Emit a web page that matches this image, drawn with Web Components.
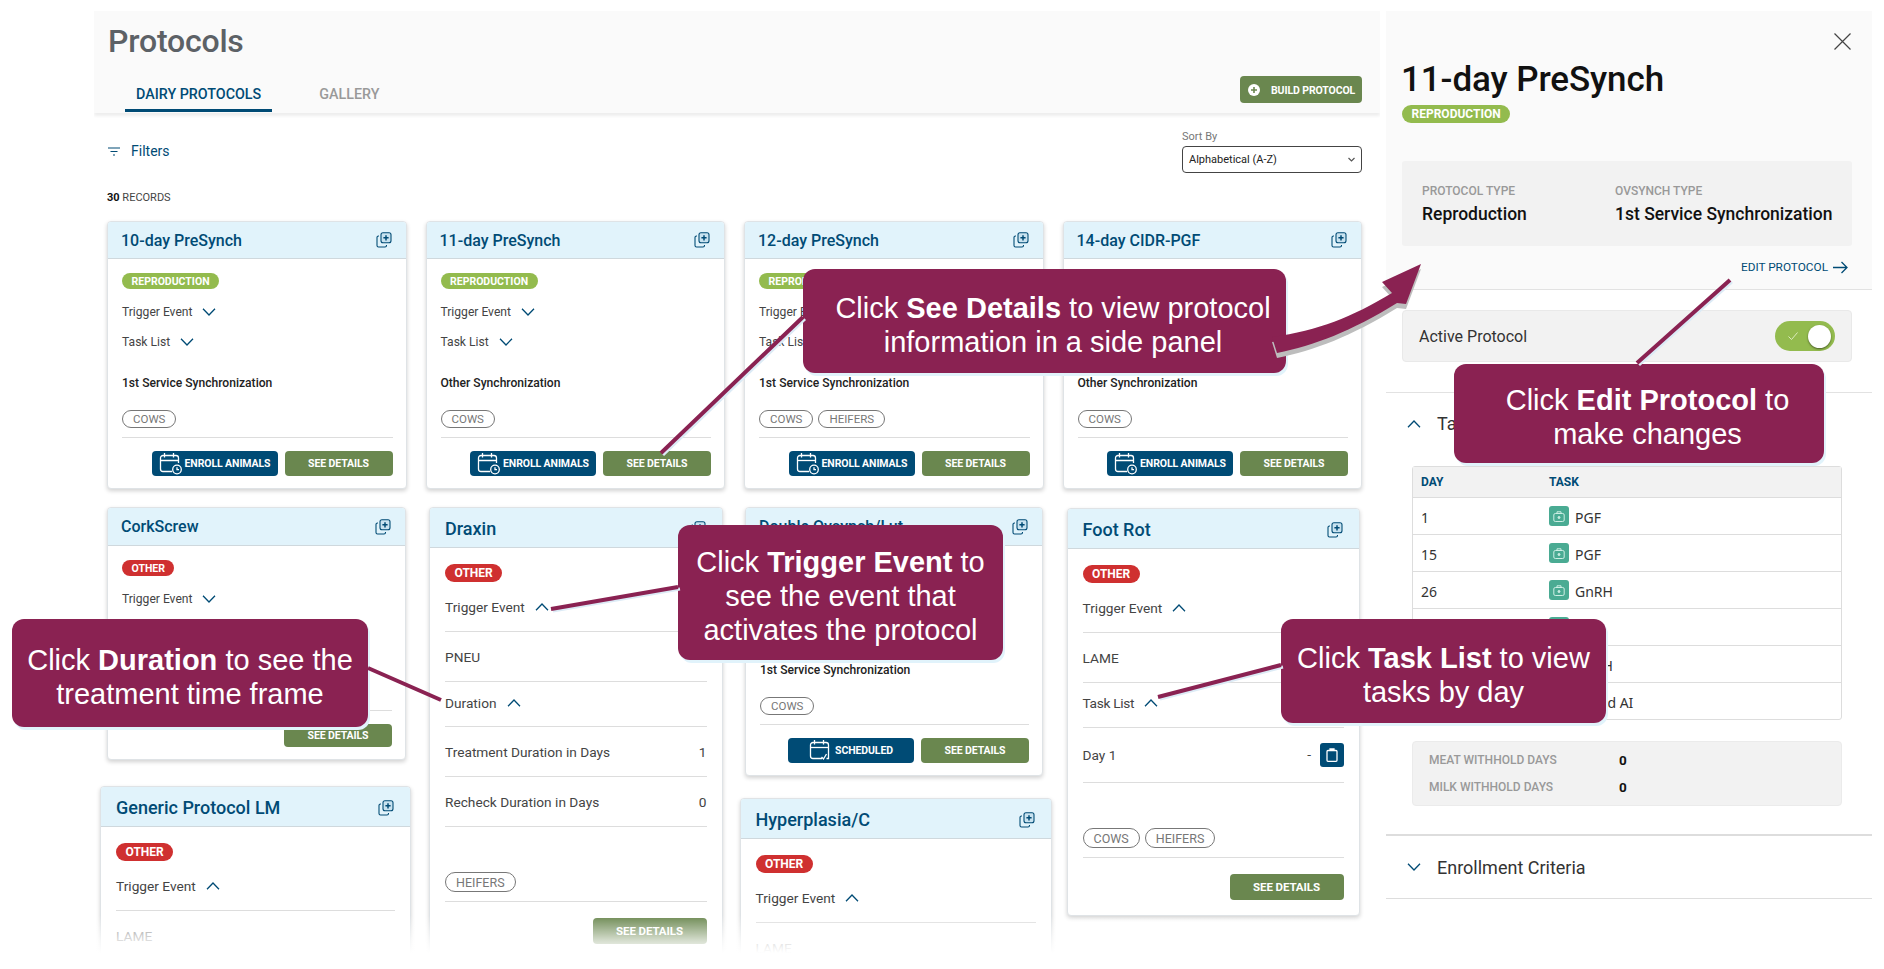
<!DOCTYPE html>
<html>
<head>
<meta charset="utf-8">
<title>Protocols</title>
<style>
html, body { margin: 0; padding: 0; background: #fff; height: 969px; overflow: hidden; }
body { font-family: Roboto, "Noto Sans", sans-serif; position: relative; }
#page { display: flex; align-items: flex-start; height: 969px; overflow: hidden; }
</style>
</head>
<body>
<div id="page">
  <protocols-main>
    <proto-header title="Protocols"></proto-header>
    <proto-toolbar records="30"></proto-toolbar>
    <card-grid>
      <proto-card title="10-day PreSynch">
        <proto-badge kind="repro">REPRODUCTION</proto-badge>
        <proto-row chevron="down" class="first">Trigger Event</proto-row>
        <proto-row chevron="down">Task List</proto-row>
        <sync-line>1st Service Synchronization</sync-line>
        <pill-row><proto-pill>COWS</proto-pill></pill-row>
        <proto-button slot="foot" kind="blue" icon="enroll" style="width:126px">ENROLL ANIMALS</proto-button>
        <proto-button slot="foot" kind="green" style="width:108px">SEE DETAILS</proto-button>
      </proto-card>
      <proto-card title="11-day PreSynch">
        <proto-badge kind="repro">REPRODUCTION</proto-badge>
        <proto-row chevron="down" class="first">Trigger Event</proto-row>
        <proto-row chevron="down">Task List</proto-row>
        <sync-line>Other Synchronization</sync-line>
        <pill-row><proto-pill>COWS</proto-pill></pill-row>
        <proto-button slot="foot" kind="blue" icon="enroll" style="width:126px">ENROLL ANIMALS</proto-button>
        <proto-button slot="foot" kind="green" style="width:108px">SEE DETAILS</proto-button>
      </proto-card>
      <proto-card title="12-day PreSynch">
        <proto-badge kind="repro">REPRODUCTION</proto-badge>
        <proto-row chevron="down" class="first">Trigger Event</proto-row>
        <proto-row chevron="down">Task List</proto-row>
        <sync-line>1st Service Synchronization</sync-line>
        <pill-row><proto-pill>COWS</proto-pill><proto-pill>HEIFERS</proto-pill></pill-row>
        <proto-button slot="foot" kind="blue" icon="enroll" style="width:126px">ENROLL ANIMALS</proto-button>
        <proto-button slot="foot" kind="green" style="width:108px">SEE DETAILS</proto-button>
      </proto-card>
      <proto-card title="14-day CIDR-PGF">
        <proto-badge kind="repro"></proto-badge>
        <proto-row class="first"></proto-row>
        <proto-row></proto-row>
        <sync-line>Other Synchronization</sync-line>
        <pill-row><proto-pill>COWS</proto-pill></pill-row>
        <proto-button slot="foot" kind="blue" icon="enroll" style="width:126px">ENROLL ANIMALS</proto-button>
        <proto-button slot="foot" kind="green" style="width:108px">SEE DETAILS</proto-button>
      </proto-card>
    </card-grid>
    <card-columns>
      <card-column style="width:311px">
        <proto-card title="CorkScrew" style="width:299px;margin-left:7px;--head:38px">
          <proto-badge kind="other">OTHER</proto-badge>
          <proto-row chevron="down" class="first">Trigger Event</proto-row>
          <proto-row></proto-row>
          <pill-row style="margin-top:39px;height:18px"></pill-row>
          <proto-button slot="foot" kind="green" style="width:108px;height:23px">SEE DETAILS</proto-button>
        </proto-card>
        <proto-card large title="Generic Protocol LM" style="margin-top:26px">
          <proto-badge kind="other">OTHER</proto-badge>
          <proto-row chevron="up" ruled style="height:44px;padding-bottom:2px;margin-top:3px">Trigger Event</proto-row>
          <proto-row muted style="height:50px">LAME</proto-row>
        </proto-card>
      </card-column>
      <card-column style="width:294px;margin-left:18px">
        <proto-card large title="Draxin">
          <proto-badge kind="other">OTHER</proto-badge>
          <proto-row chevron="up" ruled style="height:44px;padding-bottom:2px;margin-top:3px">Trigger Event</proto-row>
          <proto-row ruled style="height:49px">PNEU</proto-row>
          <proto-row chevron="up" ruled style="height:42px;padding-bottom:2px">Duration</proto-row>
          <proto-row ruled style="height:49px">Treatment Duration in Days<span slot="end">1</span></proto-row>
          <proto-row ruled style="height:49px">Recheck Duration in Days<span slot="end">0</span></proto-row>
          <pill-row style="margin-top:45px"><proto-pill>HEIFERS</proto-pill></pill-row>
          <proto-button slot="foot" kind="green" style="width:114px">SEE DETAILS</proto-button>
        </proto-card>
      </card-column>
      <card-column style="width:312.5px;margin-left:16.5px">
        <proto-card title="Double Ovsynch/Lut" style="width:298px;margin-left:5.5px;--head:38px">
          <proto-badge kind="other"></proto-badge>
          <proto-row class="first"></proto-row>
          <proto-row></proto-row>
          <sync-line>1st Service Synchronization</sync-line>
          <pill-row><proto-pill>COWS</proto-pill></pill-row>
          <proto-button slot="foot" kind="blue" icon="scheduled" style="width:126px">SCHEDULED</proto-button>
          <proto-button slot="foot" kind="green" style="width:108px">SEE DETAILS</proto-button>
        </proto-card>
        <proto-card large title="Hyperplasia/C" style="margin-top:22px">
          <proto-badge kind="other">OTHER</proto-badge>
          <proto-row chevron="up" ruled style="height:44px;padding-bottom:2px;margin-top:3px">Trigger Event</proto-row>
          <proto-row muted style="height:50px">LAME</proto-row>
        </proto-card>
      </card-column>
      <card-column style="width:293.5px;margin-left:14.5px;margin-top:1px">
        <proto-card large title="Foot Rot">
          <proto-badge kind="other">OTHER</proto-badge>
          <proto-row chevron="up" ruled style="height:44px;padding-bottom:2px;margin-top:3px">Trigger Event</proto-row>
          <proto-row ruled style="height:49px">LAME</proto-row>
          <proto-row chevron="up" ruled style="height:40px;padding-bottom:4px;letter-spacing:-.3px">Task List</proto-row>
          <proto-row ruled style="height:54px">Day 1<span slot="end">- <clip-button></clip-button></span></proto-row>
          <pill-row style="margin-top:45px"><proto-pill>COWS</proto-pill><proto-pill>HEIFERS</proto-pill></pill-row>
          <proto-button slot="foot" kind="green" style="width:114px">SEE DETAILS</proto-button>
        </proto-card>
      </card-column>
    </card-columns>
    <fade-out></fade-out>
  </protocols-main>
  <side-panel title="11-day PreSynch"></side-panel>
</div>
<tutorial-layer>
  <call-out style="left:803px;top:269px;width:483px;height:104px;padding-left:17px">Click <b>See Details</b> to view protocol<br>information in a side panel</call-out>
  <call-out style="left:1454px;top:364px;width:370px;height:99px;padding-left:17px">Click <b>Edit Protocol</b> to<br>make changes</call-out>
  <call-out style="left:678px;top:525px;width:325px;height:135px">Click <b>Trigger Event</b> to<br>see the event that<br>activates the protocol</call-out>
  <call-out style="left:12px;top:619px;width:356px;height:108px">Click <b>Duration</b> to see the<br>treatment time frame</call-out>
  <call-out style="left:1281px;top:619px;width:325px;height:104px">Click <b>Task List</b> to view<br>tasks by day</call-out>
</tutorial-layer>

<script>
const BLUE = '#004b75';
const chevronSvg = dir => `<svg width="14" height="8" viewBox="0 0 14 8" fill="none" stroke="${BLUE}" stroke-width="1.3">
  <polyline points="${dir === 'up' ? '1,7.2 7,1 13,7.2' : '1,.8 7,7 13,.8'}"/></svg>`;

const calendarBase = `<path d="M12 4.5H4a2.5 2.5 0 0 0-2.5 2.5v11A2.5 2.5 0 0 0 4 20.500h9" /><path d="M1.500 9.500h17.500" /><path d="M5.500 2v4.500M14.500 2v4.500" /><path d="M12 4.500h5a2.500 2.500 0 0 1 2.500 2.500v5"/>`;
const ICONS = {
  enroll: `<svg width="24" height="25" viewBox="0 0 24 25" fill="none" stroke="#fff" stroke-width="1.300">${calendarBase}<circle cx="18" cy="18.500" r="4.300"/><path d="M18 16.200v2.500h2"/></svg>`,
  scheduled: `<svg width="24" height="25" viewBox="0 0 24 25" fill="none" stroke="#fff" stroke-width="1.300">${calendarBase}<path d="M19.500 12v8.500h-2"/><path d="M12.500 19l2 2 3-5" /></svg>`
};

class ProtocolsMain extends HTMLElement {
  connectedCallback() {
    this.attachShadow({ mode: 'open' });
    this.shadowRoot.innerHTML = `
      <style>
        :host { display: block; position: relative; box-sizing: border-box; width: 1286px; margin-left: 94px; padding-top: 11px; height: 969px; overflow: hidden; }
      </style>
      <slot></slot>`;
  }
}

class ProtoHeader extends HTMLElement {
  connectedCallback() {
    this.attachShadow({ mode: 'open' });
    this.shadowRoot.innerHTML = `
      <style>
        :host { display: flex; justify-content: space-between; align-items: flex-end; height: 102px; background: #fafafa; box-shadow: 0 3px 3px #eee; box-sizing: border-box; padding: 0 18px 0 14px; }
        h1 { margin: 0; font-size: 32px; line-height: 38px; font-weight: 500; color: #5c6166; letter-spacing: -.2px; padding-top: 11px; }
        .left { display: flex; flex-direction: column; height: 100%; justify-content: space-between; }
        .tabs { display: flex; padding-left: 17px; }
        .tab { font-size: 14.300px; font-weight: 500; line-height: 16px; padding: 0 11px 7px; border-bottom: 3px solid transparent; color: #999; margin-bottom: 1px; }
        .tab.on { color: ${BLUE}; border-bottom-color: ${BLUE}; margin-right: 36px; }
        .build { display: flex; align-items: center; gap: 11px; height: 27px; padding: 1px 6px 0 8px; width: 122px; box-sizing: border-box; background: #6a874f; border-radius: 4px; color: #fff; font-size: 10.500px; font-weight: 700; margin-bottom: 10px; white-space: nowrap; letter-spacing: -.1px; }
      </style>
      <div class="left">
        <h1>${this.getAttribute('title')}</h1>
        <div class="tabs"><div class="tab on">DAIRY PROTOCOLS</div><div class="tab">GALLERY</div></div>
      </div>
      <div class="build">
        <svg width="12" height="12" viewBox="0 0 12 12"><circle cx="6" cy="6" r="6" fill="#fff"/><path d="M6 3v6M3 6h6" stroke="#6a874f" stroke-width="1.600"/></svg>
        BUILD PROTOCOL
      </div>`;
  }
}

class ProtoToolbar extends HTMLElement {
  connectedCallback() {
    this.attachShadow({ mode: 'open' });
    this.shadowRoot.innerHTML = `
      <style>
        :host { display: block; padding: 0 18px 0 13px; height: 108px; box-sizing: border-box; }
        .top { display: flex; justify-content: space-between; padding-top: 17px; height: 60px; box-sizing: border-box; }
        .filters { display: flex; align-items: center; gap: 11px; color: ${BLUE}; font-size: 14px; padding-left: 1px; height: 42px; }
        .sort { width: 180px; }
        .sort label { display: block; font-size: 11px; line-height: 13px; color: #777; }
        .select { display: flex; justify-content: space-between; align-items: center; height: 27px; margin-top: 3px; box-sizing: border-box; border: 1px solid #444; border-radius: 4px; padding: 0 6px; font-size: 11px; color: #222; }
        .rec { font-size: 11px; line-height: 14px; color: #444; margin-top: 18px; }
        .rec b { color: #111; font-weight: 700; }
      </style>
      <div class="top">
        <div class="filters">
          <svg width="12" height="9" viewBox="0 0 12 9" stroke="${BLUE}" stroke-width="1.200"><path d="M0 1h12M2.500 4.500h7M5 8h2"/></svg>
          Filters
        </div>
        <div class="sort">
          <label>Sort By</label>
          <div class="select">Alphabetical (A-Z)
            <svg width="7" height="5" viewBox="0 0 7 5" fill="none" stroke="#555" stroke-width="1.200"><polyline points=".5,1 3.500,4 6.500,1"/></svg>
          </div>
        </div>
      </div>
      <div class="rec"><b>30</b> RECORDS</div>`;
  }
}

class CardGrid extends HTMLElement {
  connectedCallback() {
    this.attachShadow({ mode: 'open' });
    this.shadowRoot.innerHTML = `
      <style>:host { display: grid; grid-template-columns: repeat(4, 1fr); column-gap: 19px; padding: 0 18px 0 13px; box-sizing: border-box; }</style>
      <slot></slot>`;
  }
}

class CardColumns extends HTMLElement {
  connectedCallback() {
    this.attachShadow({ mode: 'open' });
    this.shadowRoot.innerHTML = `
      <style>:host { display: flex; align-items: flex-start; margin-top: 18px; padding-left: 6px; }</style>
      <slot></slot>`;
  }
}

class CardColumn extends HTMLElement {
  connectedCallback() {
    this.attachShadow({ mode: 'open' });
    this.shadowRoot.innerHTML = `
      <style>:host { display: block; flex: none; }</style>
      <slot></slot>`;
  }
}

class ProtoCard extends HTMLElement {
  connectedCallback() {
    this.attachShadow({ mode: 'open' });
    this.shadowRoot.innerHTML = `
      <style>
        :host { display: block; box-sizing: border-box; border: 1px solid #dfe3e6; border-radius: 4px; box-shadow: 0 2px 4px rgba(0,0,0,.18); background: #fff; overflow: hidden;
          font-size: 12.100px; color: #444; --pad-l: 14px; --pad-r: 13px; --title-l: -1px; --head: 37px; --title: 16px; --badge-h: 16px; --badge-fs: 10.500px; --pill-h: 18px; --pill-fs: 11.500px; --btn-h: 25px; --btn-fs: 10.500px; }
        :host([large]) { font-size: 13.700px; --pad-l: 15px; --pad-r: 15.500px; --title-l: 0px; --head: 40px; --title: 18px; --badge-h: 18px; --badge-fs: 12px; --pill-h: 20px; --pill-fs: 12.500px; --btn-h: 26px; --btn-fs: 11.500px; }
        .head { display: flex; justify-content: space-between; align-items: center; height: var(--head); box-sizing: border-box; background: #e1f3fb; border-bottom: 1px solid #cfd8dd; padding: 0 calc(var(--pad-r) + 1px) 0 var(--pad-l); }
        :host([large]) .head { padding-top: 2px; }
        .title { font-size: var(--title); font-weight: 500; color: ${BLUE}; white-space: nowrap; margin-left: var(--title-l); }
        .body { padding: 14px var(--pad-r) 0 var(--pad-l); }
        :host([large]) .body { padding-top: 16px; }
        .foot { display: flex; justify-content: flex-end; gap: 7px; margin: 9px var(--pad-r) 0 var(--pad-l); padding: 13px 0 12px; border-top: 1px solid #ddd; }
        :host([large]) .foot { padding: 16px 0 15px; margin-top: 9px; }
      </style>
      <div class="head">
        <span class="title">${this.getAttribute('title')}</span>
        <svg width="16" height="16" viewBox="0 0 16 16" fill="none" stroke="${BLUE}" stroke-width="1.100">
          <rect x="5" y=".8" width="10" height="10" rx="2" fill="#c9e3f0"/>
          <path d="M10 3.200v5.200M7.400 5.800h5.200" stroke-width="1.500"/>
          <path d="M3 4H2.500A1.500 1.500 0 0 0 1 5.500v8A1.500 1.500 0 0 0 2.500 15H9a1.500 1.500 0 0 0 1.500-1.500V13"/>
        </svg>
      </div>
      <div class="body"><slot></slot></div>
      <div class="foot"><slot name="foot"></slot></div>`;
  }
}

class ProtoBadge extends HTMLElement {
  connectedCallback() {
    this.attachShadow({ mode: 'open' });
    this.shadowRoot.innerHTML = `
      <style>
        :host { display: inline-flex; vertical-align: top; align-items: center; height: var(--badge-h, 16px); padding: 0 9.500px; border-radius: 9px; color: #fff; font-weight: 700; font-size: var(--badge-fs, 10.500px); background: #93bb4e; }
        :host([kind="other"]) { background: #cf3030; }
      </style>
      <slot></slot>`;
  }
}

class ProtoRow extends HTMLElement {
  connectedCallback() {
    this.attachShadow({ mode: 'open' });
    const dir = this.getAttribute('chevron');
    this.shadowRoot.innerHTML = `
      <style>
        :host { display: flex; align-items: center; height: 30px; box-sizing: content-box; color: #444; }
        :host(.first) { margin-top: 8px; }
        :host([ruled]) { border-bottom: 1px solid #ddd; }
        :host([muted]) { color: #888; }
        svg { margin-left: 10px; }
        .end { margin-left: auto; display: flex; }
      </style>
      <span><slot></slot></span>${dir ? chevronSvg(dir) : ''}<span class="end"><slot name="end"></slot></span>`;
  }
}

class SyncLine extends HTMLElement {
  connectedCallback() {
    this.attachShadow({ mode: 'open' });
    this.shadowRoot.innerHTML = `
      <style>:host { display: block; margin-top: 17px; line-height: 18px; height: 18px; color: #222; font-weight: 500; }</style>
      <slot></slot>`;
  }
}

class PillRow extends HTMLElement {
  connectedCallback() {
    this.attachShadow({ mode: 'open' });
    this.shadowRoot.innerHTML = `
      <style>:host { display: flex; gap: 5px; margin-top: 18px; }</style>
      <slot></slot>`;
  }
}

class ProtoPill extends HTMLElement {
  connectedCallback() {
    this.attachShadow({ mode: 'open' });
    this.shadowRoot.innerHTML = `
      <style>:host { display: inline-flex; align-items: center; box-sizing: border-box; height: var(--pill-h, 18px); padding: 0 10px; border: 1px solid #777; border-radius: 10px; color: #777; font-size: var(--pill-fs, 11.500px); }</style>
      <slot></slot>`;
  }
}

class ProtoButton extends HTMLElement {
  connectedCallback() {
    this.attachShadow({ mode: 'open' });
    const icon = ICONS[this.getAttribute('icon')] || '';
    this.shadowRoot.innerHTML = `
      <style>
        :host { display: flex; align-items: center; justify-content: center; gap: 2px; box-sizing: border-box; height: var(--btn-h, 25px); border-radius: 4px; background: #6a874f; color: #fff; font-weight: 700; font-size: var(--btn-fs, 10.500px); white-space: nowrap; letter-spacing: -.1px; }
        :host([kind="blue"]) { background: ${BLUE}; }
      </style>
      ${icon}<slot></slot>`;
  }
}

class ClipButton extends HTMLElement {
  connectedCallback() {
    this.attachShadow({ mode: 'open' });
    this.shadowRoot.innerHTML = `
      <style>:host { display: inline-flex; align-items: center; justify-content: center; width: 24px; height: 24px; margin-left: 5px; background: ${BLUE}; border-radius: 3px; vertical-align: middle; }</style>
      <svg width="12" height="14" viewBox="0 0 12 14" fill="none" stroke="#fff" stroke-width="1.300"><rect x="1" y="2.500" width="10" height="10.800" rx="1"/><path d="M4 2.500V1h4v1.500" fill="#fff"/></svg>`;
  }
}

class FadeOut extends HTMLElement {
  connectedCallback() {
    this.attachShadow({ mode: 'open' });
    this.shadowRoot.innerHTML = `
      <style>:host { display: block; position: absolute; left: 0; right: 0; top: 915px; bottom: 0; background: linear-gradient(rgba(255,255,255,0), rgba(255,255,255,.7) 25px, #fff 38px); }</style>`;
  }
}

class TaskRow extends HTMLElement {
  connectedCallback() {
    this.attachShadow({ mode: 'open' });
    this.shadowRoot.innerHTML = `
      <style>
        :host { display: grid; grid-template-columns: 128px 1fr; align-items: center; height: 37px; box-sizing: border-box; padding-left: 8px; border-top: 1px solid #ddd; font-family: "Noto Sans", sans-serif; font-size: 14px; color: #333; }
        .task { display: flex; align-items: center; gap: 6px; }
        .txt { padding-top: 2px; }
        .ico { width: 20px; height: 20px; border-radius: 3px; background: #4aab93; display: flex; align-items: center; justify-content: center; }
      </style>
      <span class="txt">${this.getAttribute('day')}</span>
      <span class="task"><span class="ico"><svg width="12" height="11" viewBox="0 0 12 11" fill="none" stroke="#cdeee4" stroke-width="1"><rect x=".8" y="2.500" width="10.400" height="8" rx="1.500"/><path d="M4 2.500V.8h4v1.700"/><circle cx="6" cy="6.500" r="1" fill="#cdeee4"/></svg></span><span class="txt"><slot></slot></span></span>`;
  }
}

class SidePanel extends HTMLElement {
  connectedCallback() {
    this.attachShadow({ mode: 'open' });
    this.shadowRoot.innerHTML = `
      <style>
        :host { display: block; flex: none; width: 486px; margin: 11px 0 0 6px; --badge-h: 18px; --badge-fs: 12px; color: #333; }
        .top { position: relative; height: 279px; box-sizing: border-box; padding: 47px 20px 0 16px; background: #fafafa; border-bottom: 1px solid #e2e2e2; }
        .close { position: absolute; right: 21px; top: 22px; }
        h2 { margin: 0 0 0 -1px; font-size: 35px; line-height: 44px; font-weight: 500; color: #111; letter-spacing: -.1px; }
        .info { display: grid; grid-template-columns: 193px 1fr; height: 85px; box-sizing: border-box; margin-top: 38px; padding: 22px 20px 0; background: #f2f2f2; border-radius: 3px; }
        .lab { font-size: 12px; line-height: 16px; font-weight: 500; color: #999; }
        .val { font-size: 17.500px; line-height: 22px; font-weight: 500; color: #111; margin-top: 4px; white-space: nowrap; }
        .edit { display: flex; justify-content: flex-end; align-items: center; gap: 5px; margin-top: 14px; padding-right: 4px; font-size: 11.800px; color: ${BLUE}; }
        .active { display: flex; justify-content: space-between; align-items: center; box-sizing: border-box; height: 52px; margin: 20px 20px 0 16px; padding: 0 16px; background: #f2f2f2; border: 1px solid #e9e9e9; border-radius: 4px; font-size: 16px; }
        .toggle { display: flex; align-items: center; justify-content: space-between; width: 60px; height: 30px; box-sizing: border-box; padding: 0 4px 0 13px; background: #93bb4e; border-radius: 15px; }
        .knob { width: 23px; height: 23px; border-radius: 50%; background: #fff; box-shadow: 0 1px 2px rgba(0,0,0,.5); }
        .rule { border-bottom: 1px solid #e2e2e2; height: 0; }
        .sec { display: flex; align-items: center; gap: 16px; padding-left: 21px; font-size: 18px; color: #333; height: 61px; }
        .table { margin: 12px 30px 0 26px; border: 1px solid #ddd; border-radius: 3px; }
        .thead { display: grid; grid-template-columns: 128px 1fr; align-items: center; height: 30px; padding-left: 8px; background: #f2f2f2; color: ${BLUE}; font-size: 12px; font-weight: 700; }
        .with { display: grid; grid-template-columns: 190px 1fr; row-gap: 0; align-content: center; height: 65px; box-sizing: border-box; margin: 21px 30px 0 26px; padding: 0 16px; background: #f2f2f2; border: 1px solid #ebebeb; border-radius: 4px; font-size: 12px; }
        .with span { line-height: 26.500px; font-weight: 500; color: #999; }
        .with b { line-height: 26.500px; color: #111; font-size: 13.500px; }
        .rule2 { margin-top: 28px; border-top: 2px solid #ddd; }
        .crit { height: 62px; border-bottom: 1px solid #ddd; }
      </style>
      <div class="top">
        <svg class="close" width="17" height="17" viewBox="0 0 17 17" stroke="#444" stroke-width="1.200"><path d="M.5.5l16 16M16.500.5l-16 16"/></svg>
        <h2>${this.getAttribute('title')}</h2>
        <proto-badge kind="repro" style="display:inline-flex;vertical-align:top;margin-top:3px">REPRODUCTION</proto-badge>
        <div class="info">
          <div><div class="lab">PROTOCOL TYPE</div><div class="val">Reproduction</div></div>
          <div><div class="lab">OVSYNCH TYPE</div><div class="val">1st Service Synchronization</div></div>
        </div>
        <div class="edit">EDIT PROTOCOL
          <svg width="15" height="13" viewBox="0 0 15 13" fill="none" stroke="${BLUE}" stroke-width="1.300"><path d="M0 6.500h14M8.500 1l5.500 5.500L8.500 12"/></svg>
        </div>
      </div>
      <div class="active">Active Protocol
        <div class="toggle">
          <svg width="10" height="8" viewBox="0 0 10 8" fill="none" stroke="#dbeabd" stroke-width="1"><path d="M.5 4.500l3 3 6-7"/></svg>
          <div class="knob"></div>
        </div>
      </div>
      <div class="rule" style="margin-top:30px"></div>
      <div class="sec">${chevronSvg('up')}<span>Task List</span></div>
      <div class="table">
        <div class="thead"><span>DAY</span><span>TASK</span></div>
        <task-row day="1">PGF</task-row>
        <task-row day="15">PGF</task-row>
        <task-row day="26">GnRH</task-row>
        <task-row day=""></task-row>
        <task-row day="">GnRH</task-row>
        <task-row day="">Timed AI</task-row>
      </div>
      <div class="with">
        <span>MEAT WITHHOLD DAYS</span><b>0</b>
        <span>MILK WITHHOLD DAYS</span><b>0</b>
      </div>
      <div class="rule2"></div>
      <div class="sec crit">${chevronSvg('down')}<span>Enrollment Criteria</span></div>`;
  }
}

class CallOut extends HTMLElement {
  connectedCallback() {
    this.attachShadow({ mode: 'open' });
    this.shadowRoot.innerHTML = `
      <style>
        :host { position: absolute; display: flex; align-items: center; justify-content: center; text-align: center; box-sizing: border-box; padding-top: 7px; background: #8a2252; color: #fff; border-radius: 12px; box-shadow: 2px 3px 0 #e1f3fb; font: 29px/34px "Liberation Sans", Arial, sans-serif; white-space: nowrap; }
      </style>
      <div><slot></slot></div>`;
  }
}

class TutorialLayer extends HTMLElement {
  connectedCallback() {
    this.attachShadow({ mode: 'open' });
    const arrow = 'M1272 337 C1320 330 1350 318 1392 293 L1382 282 L1421 264 L1406 304 L1397 303 C1350 332 1315 345 1277 353 Z';
    this.shadowRoot.innerHTML = `
      <style>
        :host { position: absolute; left: 0; top: 0; width: 1884px; height: 969px; display: block; }
        svg { position: absolute; left: 0; top: 0; }
      </style>
      <slot></slot>
      <svg width="1884" height="969" viewBox="0 0 1884 969" fill="none">
        <g stroke="#dcebf6" stroke-width="3" transform="translate(2 2)">
          <path d="M661 453L803 317M1730 280L1637 363M551 609L678 587M1158 697L1281 665"/>
        </g>
        <g stroke="#8a2252" stroke-width="4">
          <path d="M661 453L803 317M1730 280L1637 363M551 609L678 587M368 668L441 700M1158 697L1281 665"/>
        </g>
        <path d="${arrow}" fill="#bdbdbd" transform="translate(0 5)"/>
        <path d="${arrow}" fill="#8a2252"/>
      </svg>`;
  }
}

customElements.define('protocols-main', ProtocolsMain);
customElements.define('proto-header', ProtoHeader);
customElements.define('proto-toolbar', ProtoToolbar);
customElements.define('card-grid', CardGrid);
customElements.define('card-columns', CardColumns);
customElements.define('card-column', CardColumn);
customElements.define('proto-card', ProtoCard);
customElements.define('proto-badge', ProtoBadge);
customElements.define('proto-row', ProtoRow);
customElements.define('sync-line', SyncLine);
customElements.define('pill-row', PillRow);
customElements.define('proto-pill', ProtoPill);
customElements.define('proto-button', ProtoButton);
customElements.define('clip-button', ClipButton);
customElements.define('fade-out', FadeOut);
customElements.define('task-row', TaskRow);
customElements.define('side-panel', SidePanel);
customElements.define('call-out', CallOut);
customElements.define('tutorial-layer', TutorialLayer);
</script>
</body>
</html>
